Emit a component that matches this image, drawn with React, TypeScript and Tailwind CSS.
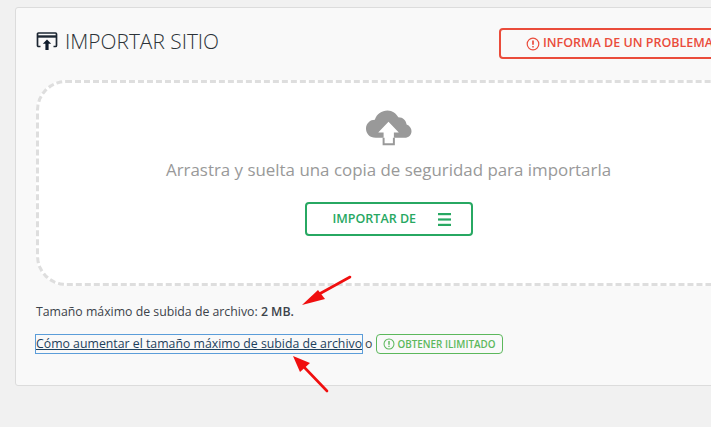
import React from "react";

function Alert({ className }: { className: string }) {
  return (
    <svg viewBox="0 0 14 14" className={className} fill="none" stroke="currentColor">
      <circle cx="7" cy="7" r="5.8" strokeWidth="1.2" />
      <path d="M7 3.6v4.2" strokeWidth="1.7" />
      <path d="M7 9v1.5" strokeWidth="1.5" />
    </svg>
  );
}

function Arrow({ d, head, box, className }: { d: string; head: string; box: string; className: string }) {
  return (
    <svg viewBox={box} className={className} fill="#f00f0f" stroke="none">
      <path d={d} stroke="#f00f0f" strokeWidth="2.6" strokeLinecap="round" fill="none" />
      <polygon points={head} />
    </svg>
  );
}

export default function App() {
  return (
    <div className="relative h-[427px] w-[711px] overflow-hidden bg-[#f1f1f1] pt-[7px] pl-[15px] font-['Open_Sans',sans-serif]">
      <div className="h-[379px] w-[750px] rounded-[3px] border border-[#dcdcdc] bg-[#f9f9f9] pl-[20px] pr-[21px]">
        <div className="flex h-[72px] items-start justify-between">
          <div className="mt-[19px] flex items-center">
            <svg viewBox="0 0 22 20" className="h-[20px] w-[22px]" fill="none">
              <path d="M4.5 15.5H2.5a1 1 0 0 1-1-1V3a1 1 0 0 1 1-1h17a1 1 0 0 1 1 1v11.5a1 1 0 0 1-1 1h-2" stroke="#1d2733" strokeWidth="1.7" />
              <path d="M1.5 5.5h19" stroke="#1d2733" strokeWidth="2.4" />
              <path d="M11 8.5l4.2 4.3h-2.6V19H9.4v-6.2H6.8z" fill="#0f1c2b" />
            </svg>
            <span className="ml-[7px] text-[20.9px] leading-[28px] font-light text-[#2c3338]">IMPORTAR SITIO</span>
          </div>
          <div className="mt-[20px] flex h-[31px] w-[244px] items-center rounded-[4px] border-2 border-[#ea4c3b] pl-[25px] text-[#ea4c3b]">
            <Alert className="h-[14px] w-[14px]" />
            <span className="ml-[3px] text-[12.5px] font-semibold whitespace-nowrap">INFORMA DE UN PROBLEMA</span>
          </div>
        </div>
        <div className="flex h-[206px] w-[705px] flex-col items-center rounded-[30px] border-[3px] border-dashed border-[#dedede] bg-white">
          <svg viewBox="0 0 48 38" className="mt-[26px] h-[38px] w-[47px]">
            <path
              d="M11 29C4.500 29 1 24.500 1 19.500 1 14 5.500 10.500 10 10.500 12 4.500 17 1 23 1c5 0 9 3 11 7 5 0 8 3.500 8.500 7.500C45.500 16.500 47.500 19.500 47.500 22c0 4-3 7-7 7z"
              fill="#999999"
            />
            <path d="M24 12.500L34.500 23.500H29.500V35.500H19V23.500H13.500z" fill="#ffffff" />
            <path d="M19 29V35.500H29.500V29" fill="none" stroke="#999999" strokeWidth="2" />
          </svg>
          <p className="mt-[11px] text-[16.9px] leading-[24px] text-[#999999] whitespace-nowrap">Arrastra y suelta una copia de seguridad para importarla</p>
          <div className="mt-[20px] flex h-[34px] w-[168px] items-center rounded-[4px] border-2 border-[#27a862] pl-[26px] text-[#27a862]">
            <span className="text-[12.5px] font-semibold whitespace-nowrap">IMPORTAR DE</span>
            <svg viewBox="0 0 13 13" className="ml-[22px] h-[13px] w-[13px]" fill="currentColor">
              <rect x="0" y="0" width="13" height="2.200" />
              <rect x="0" y="5.400" width="13" height="2.200" />
              <rect x="0" y="10.800" width="13" height="2.200" />
            </svg>
          </div>
        </div>
        <p className="mt-[17px] text-[12.3px] leading-[18px] text-[#3c434a]">
          Tamaño máximo de subida de archivo: <span className="font-semibold">2 MB.</span>
        </p>
        <div className="mt-[13px] flex items-center text-[12.3px] leading-[18px] text-[#3c434a]">
          <a className="text-[#1d3f5c] underline outline outline-[#5b9dd9] whitespace-nowrap">Cómo aumentar el tamaño máximo de subida de archivo</a>
          <span className="ml-[3px]">o</span>
          <div className="ml-[4px] flex h-[20px] items-center rounded-[4px] border border-[#5cb85c] px-[6px] text-[#5cb85c]">
            <Alert className="h-[12px] w-[12px]" />
            <span className="ml-[2px] text-[9.9px] font-semibold whitespace-nowrap">OBTENER ILIMITADO</span>
          </div>
        </div>
      </div>
      <Arrow
        box="0 0 60 40"
        className="absolute top-[270px] left-[298px] h-[40px] w-[60px]"
        d="M52 7L14 28"
        head="20,20 27,29 4,35"
      />
      <Arrow
        box="0 0 40 45"
        className="absolute top-[350px] left-[290px] h-[45px] w-[40px]"
        d="M37 41L14 17"
        head="3,6 20,13 10,22"
      />
    </div>
  );
}
